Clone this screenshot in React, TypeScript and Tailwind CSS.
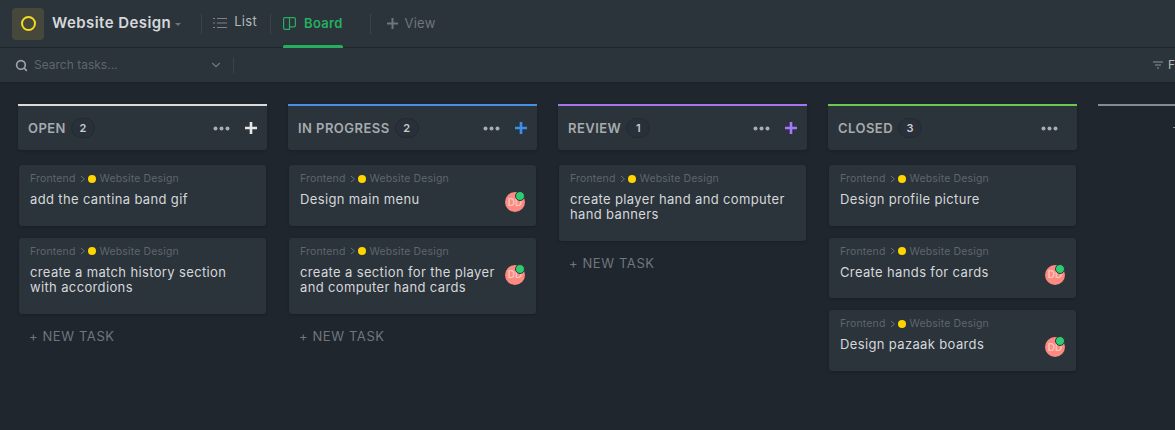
import React from 'react';
import { ChevronDown, Search } from 'lucide-react';
import clsx from 'clsx';

type Task = { title: string[]; avatar?: boolean; height: string };
type Column = {
  name: string;
  count: number;
  border: string;
  plus?: string;
  tasks: Task[];
  newTask?: boolean;
};

const columns: Column[] = [
  {
    name: 'OPEN',
    count: 2,
    border: 'border-[#d9dadb]',
    plus: 'stroke-[#e4e6e8]',
    newTask: true,
    tasks: [
      { title: ['add the cantina band gif'], height: 'h-[60.5px]' },
      { title: ['create a match history section', 'with accordions'], height: 'h-[76px]' },
    ],
  },
  {
    name: 'IN PROGRESS',
    count: 2,
    border: 'border-[#4a90e2]',
    plus: 'stroke-[#3b8eea]',
    newTask: true,
    tasks: [
      { title: ['Design main menu'], avatar: true, height: 'h-[60.5px]' },
      { title: ['create a section for the player', 'and computer hand cards'], avatar: true, height: 'h-[76px]' },
    ],
  },
  {
    name: 'REVIEW',
    count: 1,
    border: 'border-[#a875ea]',
    plus: 'stroke-[#a875ff]',
    newTask: true,
    tasks: [{ title: ['create player hand and computer', 'hand banners'], height: 'h-[76px]' }],
  },
  {
    name: 'CLOSED',
    count: 3,
    border: 'border-[#6bc950]',
    tasks: [
      { title: ['Design profile picture'], height: 'h-[60.5px]' },
      { title: ['Create hands for cards'], avatar: true, height: 'h-[60.5px]' },
      { title: ['Design pazaak boards'], avatar: true, height: 'h-[61px]' },
    ],
  },
];

function Dots() {
  return (
    <svg width="17" height="5" viewBox="0 0 17 5" className="fill-[#a9adb1]">
      <circle cx="2.5" cy="2.5" r="2" />
      <circle cx="8.5" cy="2.5" r="2" />
      <circle cx="14.5" cy="2.5" r="2" />
    </svg>
  );
}

function TaskCard({ task }: { task: Task }) {
  return (
    <div className={clsx('relative mx-px rounded-[3px] bg-[#2b333b] px-[11px] pt-[7px] shadow-[0_1px_3px_rgba(0,0,0,0.2)]', task.height)}>
      <div className="flex h-[13px] items-center text-[10.5px] leading-[13px] tracking-[0.15px] text-[#5f666d]">
        <span>Frontend</span>
        <svg width="6" height="8" viewBox="0 0 6 8" className="ml-[5px] mr-[2px] fill-none stroke-[#6b7278]">
          <path d="M1 1l3.5 3L1 7" />
        </svg>
        <span className="mr-[3px] h-2 w-2 rounded-full bg-[#ffd500]" />
        <span>Website Design</span>
      </div>
      <div className="mt-[7px] text-[13px] leading-[15px] tracking-[0.36px] text-[#d5d8da]">
        {task.title.map(line => (
          <div key={line}>{line}</div>
        ))}
      </div>
      {task.avatar && (
        <div className="absolute right-[11px] top-[27px] flex h-5 w-5 items-center justify-center rounded-full bg-[#fb8a80] text-[10px] font-semibold text-[#ffc4be]">
          DD
          <span className="absolute -top-px right-0 h-[10px] w-[10px] rounded-full border border-[#2b333b] bg-[#2ecc71]" />
        </div>
      )}
    </div>
  );
}

function BoardColumn({ column }: { column: Column }) {
  return (
    <div className="w-[249px] shrink-0">
      <div className={clsx('flex h-[46px] items-center rounded-b-[3px] border-t-[2px] bg-[#2b333b] px-[10px] shadow-[0_1px_3px_rgba(0,0,0,0.2)]', column.border)}>
        <span className="pt-[2px] text-[13px] font-semibold tracking-[0.45px] text-[#a6abaf]">{column.name}</span>
        <span className="ml-[5px] flex h-5 w-6 items-center justify-center rounded-full border border-[#232a31] bg-[#28303a] text-[11px] font-semibold text-[#c9cccf]">
          {column.count}
        </span>
        <div className="ml-auto flex items-center gap-[15px]">
          {column.plus ? (
            <>
              <Dots />
              <svg width="12" height="12" viewBox="0 0 12 12" className={clsx('fill-none', column.plus)} strokeWidth="2.6">
                <path d="M6 0v12M0 6h12" />
              </svg>
            </>
          ) : (
            <span className="mr-[9px] flex">
              <Dots />
            </span>
          )}
        </div>
      </div>
      <div className="mt-[15px] flex flex-col gap-3">
        {column.tasks.map(task => (
          <TaskCard key={task.title[0]} task={task} />
        ))}
      </div>
      {column.newTask && (
        <div className="ml-[11px] mt-[13px] text-[13px] tracking-[0.6px] text-[#6f767c]">+ NEW TASK</div>
      )}
    </div>
  );
}

export default function App() {
  return (
    <div className="flex h-screen w-full flex-col overflow-hidden bg-[#1f262e] font-['Inter',sans-serif]">
      {/* top bar */}
      <header className="flex h-[48px] shrink-0 items-center border-b border-[#1f262e] bg-[#2b333b] pl-3">
        <div className="flex h-8 w-8 items-center justify-center rounded-[4px] bg-[#45483a]">
          <span className="h-[15px] w-[15px] rounded-full border-[2px] border-[#f2dc1d]" />
        </div>
        <span className="ml-2 text-[15px] font-semibold tracking-[0.43px] text-[#d5d8da]">Website Design</span>
        <span className="ml-[4px] mt-px h-0 w-0 border-x-[3px] border-t-[3px] border-x-transparent border-t-[#70767c]" />
        <span className="ml-[20px] h-[20px] w-px bg-[#3a424a]" />
        <svg width="14" height="12" viewBox="0 0 14 12" className="mb-[2px] ml-[11px] fill-none stroke-[#7d8388]" strokeWidth="1.2">
          <path d="M4 1.5h10M4 6h10M4 10.5h10M0 1.5h2M0 6h2M0 10.5h2" />
        </svg>
        <span className="mb-[3px] ml-[7px] text-[13px] tracking-[0.3px] text-[#b5b9bc]">List</span>
        <span className="ml-[13px] h-[20px] w-px bg-[#3a424a]" />
        <div className="relative ml-3 flex h-full items-center">
          <svg width="13" height="13" viewBox="0 0 13 13" className="fill-none stroke-[#27ae60]" strokeWidth="1.2">
            <path d="M6.5 1v11.4H2a1.4 1.4 0 0 1-1.4-1.4V2A1.4 1.4 0 0 1 2 .6h9a1.4 1.4 0 0 1 1.4 1.4v6.5a1.4 1.4 0 0 1-1.4 1.4H6.5" />
          </svg>
          <span className="ml-[8px] text-[13px] font-semibold tracking-[0.3px] text-[#27ae60]">Board</span>
          <span className="absolute bottom-[-1px] left-0 right-0 h-[3px] rounded-t-[2px] bg-[#27ae60]" />
        </div>
        <span className="ml-[27px] h-[20px] w-px bg-[#3a424a]" />
        <svg width="11" height="11" viewBox="0 0 11 11" className="ml-[16px] fill-none stroke-[#6f767c]" strokeWidth="2">
          <path d="M5.5 0v11M0 5.5h11" />
        </svg>
        <span className="ml-[7px] text-[13px] tracking-[0.2px] text-[#6f767c]">View</span>
      </header>

      {/* search / filter bar */}
      <div className="flex h-[34px] shrink-0 items-center bg-[#2b333b] pl-[15px] shadow-[0_1px_2px_rgba(0,0,0,0.15)]">
        <Search size={13} strokeWidth={3} className="text-[#a0a5a9]" />
        <span className="ml-[6px] w-[175px] text-[12px] text-[#5f666d]">Search tasks...</span>
        <ChevronDown size={14} className="text-[#70767c]" />
        <span className="ml-[10px] h-[16px] w-px bg-[#3a424a]" />
        <div className="ml-auto flex w-[22px] shrink-0 items-center gap-[5px] overflow-hidden">
          <svg width="10" height="8" viewBox="0 0 10 8" className="shrink-0 fill-none stroke-[#8b9196]" strokeWidth="1.2">
            <path d="M0 1h10M2 4h6M4 7h2" />
          </svg>
          <span className="text-[12px] text-[#b5b9bc]">F</span>
        </div>
      </div>

      {/* board */}
      <main className="flex flex-1 items-start gap-[21px] overflow-hidden pl-[18px] pt-[22px]">
        {columns.map(column => (
          <BoardColumn key={column.name} column={column} />
        ))}
        <div className="h-[46px] w-[249px] shrink-0 border-t-[2px] border-[#878b90] pl-[75px] pt-[21px]">
          <span className="block h-px w-[4px] bg-[#8b9196]" />
        </div>
      </main>
    </div>
  );
}
